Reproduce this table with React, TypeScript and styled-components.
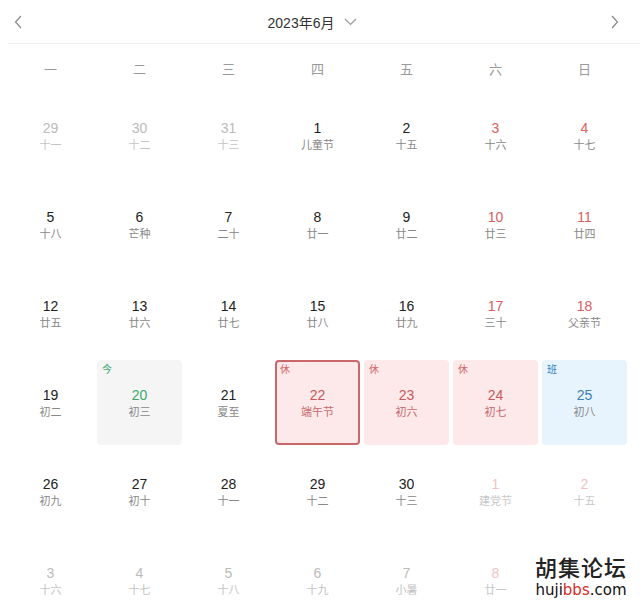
import React from "react";
import styled, { createGlobalStyle } from "styled-components";

const Global = createGlobalStyle`
  html, body { margin: 0; padding: 0; background: #fff; }
  body {
    width: 640px; height: 606px; overflow: hidden;
    font-family: "Liberation Sans", "Noto Sans CJK SC", Arial, sans-serif;
  }
`;

const Page = styled.div`
  position: relative;
  width: 640px;
  height: 606px;
  overflow: hidden;
`;

const Header = styled.div`
  height: 43px;
  margin-left: 8px;
  border-bottom: 1px solid #f0f0f0;
  display: flex;
  align-items: center;
  justify-content: space-between;
  padding: 0 19px 0 4px;
`;

const NavBtn = styled.div`
  width: 12px;
  height: 14px;
  display: flex;
  align-items: center;
  justify-content: center;
`;

const Title = styled.div`
  display: flex;
  align-items: center;
  gap: 10px;
  font-size: 14px;
  color: #333;
  margin-left: -8px;
`;

const Grid = styled.div`
  margin-left: 8px;
  width: 619px;
  display: grid;
  grid-template-columns: repeat(7, 85px);
  column-gap: 4px;
`;

const WeekRow = styled(Grid)`
  height: 49px;
  align-items: center;
`;

const WeekLabel = styled.div`
  text-align: center;
  font-size: 13px;
  color: #999;
`;

const DayGrid = styled(Grid)`
  grid-auto-rows: 85px;
  row-gap: 4px;
`;

type Kind = "prev" | "normal" | "today" | "holiday" | "selected" | "work";

const bgFor: Record<Kind, string> = {
  prev: "transparent",
  normal: "transparent",
  today: "#f5f5f5",
  holiday: "#fde9e9",
  selected: "#fde9e9",
  work: "#e7f3fd",
};

const Cell = styled.div<{ $kind: Kind }>`
  position: relative;
  box-sizing: border-box;
  border-radius: 4px;
  background: ${(p) => bgFor[p.$kind]};
  border: ${(p) => (p.$kind === "selected" ? "2px solid #c9676a" : "2px solid transparent")};
  display: flex;
  flex-direction: column;
  align-items: center;
  justify-content: center;
  padding-top: 3px;
`;

const Num = styled.div<{ $color: string }>`
  font-size: 14px;
  line-height: 17px;
  color: ${(p) => p.$color};
`;

const Lunar = styled.div<{ $color: string }>`
  font-size: 11px;
  line-height: 17px;
  color: ${(p) => p.$color};
`;

const Badge = styled.span<{ $color: string }>`
  position: absolute;
  top: 1px;
  left: 3px;
  font-size: 10px;
  line-height: 14px;
  color: ${(p) => p.$color};
`;

const Watermark = styled.div`
  position: absolute;
  left: 533px;
  top: 552px;
  display: flex;
  flex-direction: column;
  align-items: center;
  background: rgba(255, 255, 255, 0.85);
  padding: 0 2px;
`;

const WmTitle = styled.div`
  font-family: "Noto Sans CJK SC", sans-serif;
  font-size: 22px;
  line-height: 28px;
  font-weight: 500;
  color: #222;
  letter-spacing: 1px;
`;

const WmUrl = styled.div`
  font-family: "DejaVu Sans", "Noto Sans", sans-serif;
  font-size: 15px;
  line-height: 20px;
  color: #111;
  span { color: #d32a2a; }
`;

type Day = {
  n: number;
  l: string;
  kind?: Kind;
  weekend?: boolean;
  other?: boolean;
  badge?: string;
};

const rows: Day[][] = [
  [
    { n: 29, l: "十一", other: true },
    { n: 30, l: "十二", other: true },
    { n: 31, l: "十三", other: true },
    { n: 1, l: "儿童节" },
    { n: 2, l: "十五" },
    { n: 3, l: "十六", weekend: true },
    { n: 4, l: "十七", weekend: true },
  ],
  [
    { n: 5, l: "十八" },
    { n: 6, l: "芒种" },
    { n: 7, l: "二十" },
    { n: 8, l: "廿一" },
    { n: 9, l: "廿二" },
    { n: 10, l: "廿三", weekend: true },
    { n: 11, l: "廿四", weekend: true },
  ],
  [
    { n: 12, l: "廿五" },
    { n: 13, l: "廿六" },
    { n: 14, l: "廿七" },
    { n: 15, l: "廿八" },
    { n: 16, l: "廿九" },
    { n: 17, l: "三十", weekend: true },
    { n: 18, l: "父亲节", weekend: true },
  ],
  [
    { n: 19, l: "初二" },
    { n: 20, l: "初三", kind: "today", badge: "今" },
    { n: 21, l: "夏至" },
    { n: 22, l: "端午节", kind: "selected", badge: "休" },
    { n: 23, l: "初六", kind: "holiday", badge: "休", weekend: true },
    { n: 24, l: "初七", kind: "holiday", badge: "休", weekend: true },
    { n: 25, l: "初八", kind: "work", badge: "班" },
  ],
  [
    { n: 26, l: "初九" },
    { n: 27, l: "初十" },
    { n: 28, l: "十一" },
    { n: 29, l: "十二" },
    { n: 30, l: "十三" },
    { n: 1, l: "建党节", other: true, weekend: true },
    { n: 2, l: "十五", other: true, weekend: true },
  ],
  [
    { n: 3, l: "十六", other: true },
    { n: 4, l: "十七", other: true },
    { n: 5, l: "十八", other: true },
    { n: 6, l: "十九", other: true },
    { n: 7, l: "小暑", other: true },
    { n: 8, l: "廿一", other: true, weekend: true },
    { n: 9, l: "廿二", other: true, weekend: true },
  ],
];

function colors(d: Day): { num: string; lunar: string; badge: string } {
  const kind = d.kind ?? "normal";
  if (kind === "today") return { num: "#3aa86b", lunar: "#888", badge: "#3aa86b" };
  if (kind === "selected" || kind === "holiday")
    return { num: "#c8585b", lunar: "#c66a6c", badge: "#d46a6c" };
  if (kind === "work") return { num: "#3b7fae", lunar: "#888", badge: "#2f7fc1" };
  if (d.other) {
    return d.weekend
      ? { num: "#efc4c4", lunar: "#c8c8c8", badge: "" }
      : { num: "#bbb", lunar: "#c4c4c4", badge: "" };
  }
  if (d.weekend) return { num: "#d9605f", lunar: "#888", badge: "" };
  return { num: "#222", lunar: "#888", badge: "" };
}

const Chevron = ({ dir }: { dir: "left" | "right" | "down" }) => {
  if (dir === "down")
    return (
      <svg width="13" height="8" viewBox="0 0 13 8">
        <polyline points="1,1 6.5,6.5 12,1" fill="none" stroke="#999" strokeWidth="1.2" />
      </svg>
    );
  const pts = dir === "left" ? "7,1 1.5,7 7,13" : "1,1 6.5,7 1,13";
  return (
    <svg width="9" height="14" viewBox="0 0 9 14">
      <polyline points={pts} fill="none" stroke="#888" strokeWidth="1.2" />
    </svg>
  );
};

const weekdays = ["一", "二", "三", "四", "五", "六", "日"];

export default function App() {
  return (
    <Page>
      <Global />
      <Header>
        <NavBtn>
          <Chevron dir="left" />
        </NavBtn>
        <Title>
          <span>2023年6月</span>
          <Chevron dir="down" />
        </Title>
        <NavBtn>
          <Chevron dir="right" />
        </NavBtn>
      </Header>
      <WeekRow>
        {weekdays.map((w) => (
          <WeekLabel key={w}>{w}</WeekLabel>
        ))}
      </WeekRow>
      <DayGrid>
        {rows.flat().map((d, i) => {
          const c = colors(d);
          return (
            <Cell key={i} $kind={d.kind ?? "normal"}>
              {d.badge && <Badge $color={c.badge}>{d.badge}</Badge>}
              <Num $color={c.num}>{d.n}</Num>
              <Lunar $color={c.lunar}>{d.l}</Lunar>
            </Cell>
          );
        })}
      </DayGrid>
      <Watermark>
        <WmTitle>胡集论坛</WmTitle>
        <WmUrl>
          huji<span>bbs</span>.com
        </WmUrl>
      </Watermark>
    </Page>
  );
}
